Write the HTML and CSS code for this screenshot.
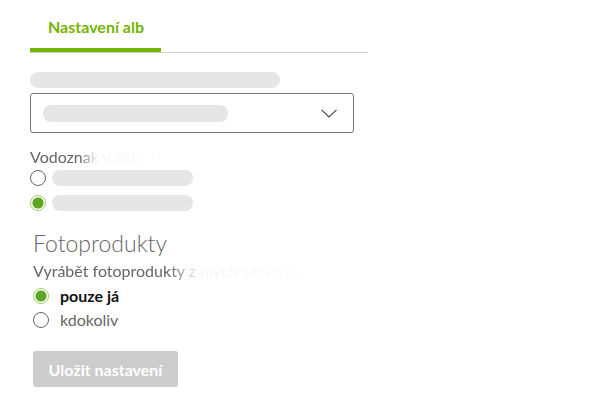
FILE: index.html
```html
<!DOCTYPE html>
<html lang="cs">
<head>
<meta charset="utf-8">
<link rel="stylesheet" href="styles.css">
</head>
<body>
<div class="page">
  <div class="tabbar">
    <div class="tab">Nastavení alb</div>
  </div>
  <div class="section">
    <div class="skel skel-title"></div>
    <div class="select">
      <div class="skel skel-select"></div>
      <svg class="chevron" width="16" height="9" viewBox="0 0 16 9"><path d="M0.5 0.8 L8 8 L15.5 0.8" fill="none" stroke="#444" stroke-width="1.1"/></svg>
    </div>
    <div class="label fade">Vodoznak v albech</div>
    <div class="radio-row">
      <span class="radio"></span>
      <div class="skel skel-opt"></div>
    </div>
    <div class="radio-row">
      <span class="radio checked"></span>
      <div class="skel skel-opt"></div>
    </div>
  </div>
  <div class="section2">
    <h2 class="heading">Fotoprodukty</h2>
    <div class="label fade2">Vyrábět fotoprodukty z mých alb může</div>
    <div class="radio-row2">
      <span class="radio checked"></span>
      <span class="opt-text bold">pouze já</span>
    </div>
    <div class="radio-row2">
      <span class="radio"></span>
      <span class="opt-text">kdokoliv</span>
    </div>
    <button class="btn">Uložit nastavení</button>
  </div>
</div>
</body>
</html>
```
FILE: styles.css
```css
html, body {
  margin: 0;
  padding: 0;
  background: #fff;
}
body {
  font-family: "Lato", "Open Sans", sans-serif;
  color: #666;
}
.page {
  padding-left: 30px;
  width: 338px;
}
.tabbar {
  display: flex;
  border-bottom: 1px solid #cfcfcf;
}
.tab {
  width: 131px;
  box-sizing: border-box;
  padding: 17px 0 11px 18px;
  line-height: 20px;
  font-size: 16px;
  font-weight: 700;
  color: #74b500;
  border-bottom: 4px solid #74b500;
}
.skel {
  background: #e6e6e6;
  border-radius: 8px;
  height: 16px;
}
.skel-title {
  width: 250px;
  margin-top: 19px;
}
.select {
  margin-top: 5px;
  width: 324px;
  height: 40px;
  box-sizing: border-box;
  border: 1px solid #777;
  border-radius: 3px;
  display: flex;
  align-items: center;
  justify-content: space-between;
  padding: 0 16px 0 12px;
}
.skel-select {
  width: 185px;
  height: 17px;
}
.chevron {
  display: block;
}
.label {
  font-size: 16px;
  line-height: 20px;
}
.section .label {
  margin-top: 14px;
}
.fade {
  -webkit-mask-image: linear-gradient(to right, #000 50px, rgba(0,0,0,0.08) 66px, rgba(0,0,0,0.02) 120px);
  mask-image: linear-gradient(to right, #000 50px, rgba(0,0,0,0.08) 66px, rgba(0,0,0,0.02) 120px);
}
.fade2 {
  -webkit-mask-image: linear-gradient(to right, #000 135px, rgba(0,0,0,0.07) 165px, rgba(0,0,0,0.02) 270px);
  mask-image: linear-gradient(to right, #000 135px, rgba(0,0,0,0.07) 165px, rgba(0,0,0,0.02) 270px);
}
.radio-row {
  display: flex;
  align-items: center;
  gap: 6px;
  margin-top: 3px;
}
.radio-row + .radio-row {
  margin-top: 9px;
}
.radio {
  width: 16px;
  height: 16px;
  box-sizing: border-box;
  border: 1px solid #666;
  border-radius: 50%;
  background: #fff;
  flex: none;
}
.radio.checked {
  border: 1.5px solid #9bd26a;
  background: radial-gradient(circle, #5ea624 0, #5ea624 5.2px, #fff 5.9px);
}
.skel-opt {
  width: 141px;
}
.section2 {
  padding-left: 3px;
}
.heading {
  margin: 19px 0 0 0;
  font-size: 23px;
  font-weight: 300;
  line-height: 26px;
  color: #666;
}
.section2 .label {
  margin-top: 5px;
}
.radio-row2 {
  display: flex;
  align-items: center;
  gap: 11px;
  line-height: 20px;
  margin-top: 5px;
}
.radio-row2 + .radio-row2 {
  margin-top: 4px;
}
.opt-text {
  font-size: 16px;
  color: #666;
}
.opt-text.bold {
  color: #111;
  font-weight: 700;
}
.btn {
  margin-top: 21px;
  width: 145px;
  height: 36px;
  border: 0;
  border-radius: 3px;
  background: #cccccc;
  color: #fff;
  font-family: "Lato", "Open Sans", sans-serif;
  font-size: 16px;
  font-weight: 700;
  padding: 0;
  display: block;
}
```
